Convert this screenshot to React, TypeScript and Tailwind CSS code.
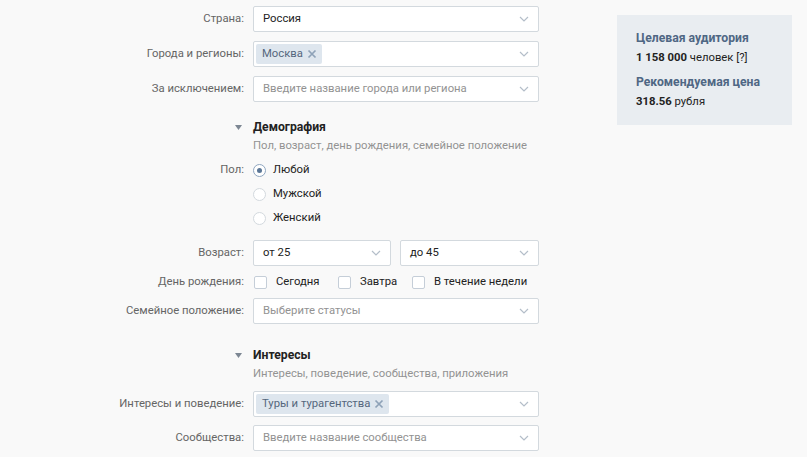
import React from "react";

const Chevron = () => (
  <svg width="10" height="6" viewBox="0 0 10 6" className="shrink-0">
    <polyline points="1,1 5,5 9,1" fill="none" stroke="#b4bec9" strokeWidth="1.2" />
  </svg>
);

const Chip = ({ text }: { text: string }) => (
  <div className="flex h-[20px] items-center rounded-[2px] bg-[#dee6ee] pl-[6px] pr-[5px] text-[#55677d]">
    <span>{text}</span>
    <svg width="10" height="10" viewBox="0 0 10 10" className="ml-[4px]">
      <path d="M1.5 1.5 L8.5 8.5 M8.5 1.5 L1.5 8.5" stroke="#8ea2b8" strokeWidth="1.7" />
    </svg>
  </div>
);

const Select = ({
  value,
  placeholder,
  chip,
  w = "w-[286px]",
}: {
  value?: string;
  placeholder?: string;
  chip?: string;
  w?: string;
}) => (
  <div
    className={`flex h-[26px] ${w} items-center justify-between rounded-[2px] border border-[#d3d9de] bg-white ${
      chip ? "pl-[2px]" : "pl-[9px]"
    } pr-[9px]`}
  >
    {chip ? (
      <Chip text={chip} />
    ) : value ? (
      <span className="text-[#222]">{value}</span>
    ) : (
      <span className="text-[#929292]">{placeholder}</span>
    )}
    <Chevron />
  </div>
);

const Row = ({
  label,
  className = "",
  children,
}: {
  label?: React.ReactNode;
  className?: string;
  children: React.ReactNode;
}) => (
  <div className={`flex items-center ${className}`}>
    <div className="flex w-[244px] shrink-0 justify-end text-[#656565]">{label}</div>
    <div className="ml-[9px] flex items-center">{children}</div>
  </div>
);

const Triangle = () => (
  <svg width="7" height="5" viewBox="0 0 7 5" className="mr-[2px]">
    <polygon points="0,0 7,0 3.5,5" fill="#7d8793" />
  </svg>
);

const Radio = ({ checked, label }: { checked?: boolean; label: string }) => (
  <div className="flex items-center">
    <div
      className={`flex h-[13px] w-[13px] items-center justify-center rounded-full border bg-white ${
        checked ? "border-[#8fa6c0]" : "border-[#d3d9de]"
      }`}
    >
      {checked && <div className="h-[5px] w-[5px] rounded-full bg-[#5a7696]" />}
    </div>
    <span className="ml-[7px] text-[#222]">{label}</span>
  </div>
);

const Checkbox = ({ label, w }: { label: string; w: string }) => (
  <div className={`flex items-center ${w}`}>
    <div className="ml-[1px] h-[13px] w-[13px] rounded-[2px] border border-[#c5ced8] bg-white" />
    <span className="ml-[9px] text-[#222]">{label}</span>
  </div>
);

export default function App() {
  return (
    <div
      className="flex h-[457px] w-[807px] overflow-hidden bg-[#f9f9f9] text-[11.3px] leading-[18px]"
      style={{ fontFamily: "Roboto, 'Liberation Sans', sans-serif" }}
    >
      <div className="flex w-[539px] shrink-0 flex-col">
        <Row label="Страна:" className="mt-[6px]">
          <Select value="Россия" />
        </Row>
        <Row label="Города и регионы:" className="mt-[9px]">
          <Select chip="Москва" />
        </Row>
        <Row label="За исключением:" className="mt-[9px]">
          <Select placeholder="Введите название города или региона" />
        </Row>

        <Row label={<Triangle />} className="mt-[16px] h-[18px]">
          <span className="text-[12.2px] font-bold text-[#222]">Демография</span>
        </Row>
        <Row className="mt-[1px] h-[18px]">
          <span className="text-[#939393]">Пол, возраст, день рождения, семейное положение</span>
        </Row>

        <Row label="Пол:" className="mt-[3px] h-[24px]">
          <Radio checked label="Любой" />
        </Row>
        <Row className="h-[24px]">
          <Radio label="Мужской" />
        </Row>
        <Row className="h-[24px]">
          <Radio label="Женский" />
        </Row>

        <Row label="Возраст:" className="mt-[10px]">
          <div className="flex gap-[9px]">
            <Select value="от 25" w="w-[138px]" />
            <Select value="до 45" w="w-[139px]" />
          </div>
        </Row>
        <Row label="День рождения:" className="mt-[7px] h-[18px]">
          <Checkbox label="Сегодня" w="w-[84px]" />
          <Checkbox label="Завтра" w="w-[74px]" />
          <Checkbox label="В течение недели" w="w-auto" />
        </Row>
        <Row label="Семейное положение:" className="mt-[7px]">
          <Select placeholder="Выберите статусы" />
        </Row>

        <Row label={<Triangle />} className="mt-[22px] h-[18px]">
          <span className="text-[12.2px] font-bold text-[#222]">Интересы</span>
        </Row>
        <Row className="mt-[1px] h-[18px]">
          <span className="text-[#939393]">Интересы, поведение, сообщества, приложения</span>
        </Row>
        <Row label="Интересы и поведение:" className="mt-[8px]">
          <Select chip="Туры и турагентства" />
        </Row>
        <Row label="Сообщества:" className="mt-[8px]">
          <Select placeholder="Введите название сообщества" />
        </Row>
      </div>

      <div className="ml-[78px] mt-[15px] h-[110px] w-[175px] shrink-0 bg-[#e9edf1] pl-[19px] pt-[14px] leading-[19px]">
        <div className="text-[12.2px] font-bold text-[#4f6784]">Целевая аудитория</div>
        <div className="text-[#222]">
          <span className="font-bold">1 158 000</span> человек [?]
        </div>
        <div className="mt-[6px] text-[12.2px] font-bold text-[#4f6784]">Рекомендуемая цена</div>
        <div className="text-[#222]">
          <span className="font-bold">318.56</span> рубля
        </div>
      </div>
    </div>
  );
}
